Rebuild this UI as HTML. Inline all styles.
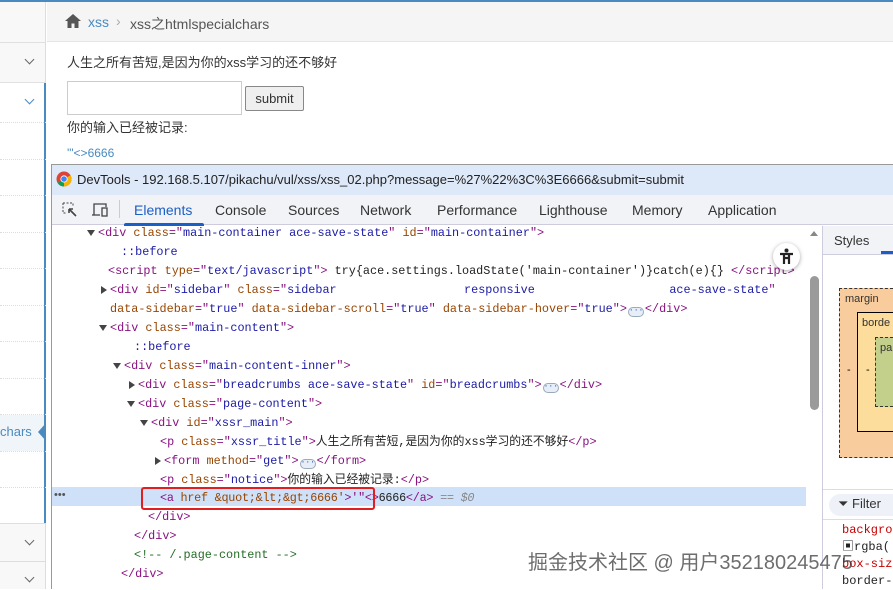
<!DOCTYPE html>
<html><head><meta charset="utf-8"><style>
*{margin:0;padding:0;box-sizing:border-box}
body{width:893px;height:589px;overflow:hidden;position:relative;background:#fff;font-family:"Liberation Sans","Noto Sans CJK SC",sans-serif}
.a{position:absolute}
.l{position:absolute;font-family:"Liberation Mono","Noto Sans CJK SC",monospace;font-size:11.8px;line-height:19px;white-space:pre;color:#222}
.t{color:#881280}.n{color:#994500}.v{color:#1a1aa6}.c{color:#236e25}
.sb{position:absolute;left:0;width:46px;border-bottom:1px dotted #ddd}
.chev{position:absolute;width:7px;height:7px;border-right:1.5px solid #666;border-bottom:1.5px solid #666;transform:rotate(45deg)}
.tri{position:absolute;left:-11px;top:6px;width:0;height:0;border-left:4px solid transparent;border-right:4px solid transparent;border-top:6px solid #444}
.trr{position:absolute;left:-9px;top:5px;width:0;height:0;border-top:4px solid transparent;border-bottom:4px solid transparent;border-left:6px solid #444}
.dots{display:inline-block;width:16px;height:10px;border:1px solid #9ab;border-radius:5px;background:#e8eef8;font-size:8px;line-height:6px;text-align:center;color:#1a56c8;vertical-align:0;margin:0 1px}
</style></head><body>
<div class="a" style="left:0;top:0;width:893px;height:2px;background:#4a8ac0"></div>
<div class="a" style="left:0;top:2px;width:46px;height:587px;background:#f8f8f8;border-right:1px solid #ddd"></div>
<div class="a" style="left:0;top:42px;width:46px;height:1px;background:#e0e0e0"></div>
<div class="chev" style="left:26px;top:56px"></div>
<div class="a" style="left:0;top:82px;width:46px;height:441px;background:#fff;border-right:2px solid #4a8ac0"></div>
<div class="a" style="left:0;top:82px;width:46px;height:1px;background:#e0e0e0"></div>
<div class="chev" style="left:26px;top:96px;border-color:#4a8ac0"></div>
<div class="sb" style="top:122px"></div><div class="sb" style="top:159px"></div><div class="sb" style="top:195px"></div><div class="sb" style="top:232px"></div><div class="sb" style="top:268px"></div><div class="sb" style="top:305px"></div><div class="sb" style="top:341px"></div><div class="sb" style="top:378px"></div><div class="sb" style="top:414px"></div><div class="sb" style="top:451px"></div><div class="sb" style="top:487px"></div>
<div class="a" style="left:0;top:415px;width:44px;height:36px;background:#f0f5fa"></div>
<div class="a" style="left:0;top:424px;font-size:13px;color:#4a8ac0">chars</div>
<div class="a" style="left:38px;top:423px;width:0;height:0;border-top:9px solid transparent;border-bottom:9px solid transparent;border-right:8px solid #4a8ac0"></div>
<div class="a" style="left:0;top:523px;width:46px;height:1px;background:#ddd"></div>
<div class="chev" style="left:26px;top:537px"></div>
<div class="a" style="left:0;top:561px;width:46px;height:1px;background:#ddd"></div>
<div class="chev" style="left:26px;top:574px"></div>
<div class="a" style="left:47px;top:2px;width:846px;height:40px;background:#f5f5f5;border-bottom:1px solid #e5e5e5"></div>
<svg class="a" style="left:64px;top:13px" width="18" height="16" viewBox="0 0 18 16"><path d="M9 1 L1 8 H3.5 V15 H7.5 V10.5 H10.5 V15 H14.5 V8 H17 Z" fill="#555"/></svg>
<div class="a" style="left:88px;top:14px;font-size:14px;color:#4a8ac0">xss</div>
<div class="a" style="left:116px;top:13px;font-size:14px;color:#aaa">›</div>
<div class="a" style="left:130px;top:14px;font-size:14px;color:#555">xss之htmlspecialchars</div>
<div class="a" style="left:67px;top:52px;font-size:13px;color:#333">人生之所有苦短,是因为你的xss学习的还不够好</div>
<div class="a" style="left:67px;top:81px;width:175px;height:34px;border:1px solid #ccc;background:#fff"></div>
<div class="a" style="left:245px;top:86px;width:59px;height:25px;border:1px solid #888;background:#efefef;border-radius:2px;font-size:13px;color:#333;text-align:center;line-height:23px">submit</div>
<div class="a" style="left:67px;top:117px;font-size:13px;color:#333">你的输入已经被记录:</div>
<div class="a" style="left:67px;top:146px;font-size:12px;color:#4a8ac0">'"&lt;&gt;6666</div>
<div class="a" style="left:51px;top:164px;width:842px;height:425px;background:#fff;border:1px solid #999;border-right:none;border-bottom:none"></div>
<div class="a" style="left:52px;top:165px;width:841px;height:30px;background:#dde8f8"></div>
<svg class="a" style="left:56px;top:171px" width="16" height="16" viewBox="0 0 16 16"><circle cx="8" cy="8" r="7.5" fill="#db4437"/><path d="M8 8 L1.5 11.7 A7.5 7.5 0 0 0 8 15.5 L11.6 9Z" fill="#0f9d58"/><path d="M8 8 L14.5 4.3 A7.5 7.5 0 0 1 8 15.5 Z" fill="#f4b400"/><circle cx="8" cy="8" r="3.6" fill="#fff"/><circle cx="8" cy="8" r="2.8" fill="#4285f4"/></svg>
<div class="a" style="left:77px;top:172px;font-size:13px;color:#222">DevTools - 192.168.5.107/pikachu/vul/xss/xss_02.php?message=%27%22%3C%3E6666&amp;submit=submit</div>
<div class="a" style="left:52px;top:195px;width:841px;height:30px;background:#f1f3f7;border-bottom:1px solid #ccd"></div>
<svg class="a" style="left:62px;top:202px" width="16" height="16" viewBox="0 0 16 16"><path d="M1 1h10v4M1 1v10h4" stroke="#444" fill="none" stroke-dasharray="2 1.5"/><path d="M7 7 L14 14 M7 7 h4 M7 7 v4" stroke="#444" stroke-width="1.6" fill="none"/></svg>
<svg class="a" style="left:91px;top:202px" width="18" height="16" viewBox="0 0 18 16"><path d="M3 13V2h12v3" stroke="#444" fill="none" stroke-width="1.3"/><path d="M1 13h8" stroke="#444" stroke-width="1.3"/><rect x="11" y="6" width="5" height="8" stroke="#444" fill="none" stroke-width="1.3"/></svg>
<div class="a" style="left:119px;top:200px;width:1px;height:18px;background:#ccc"></div>
<div class="a" style="left:124px;top:223px;width:80px;height:3px;background:#1a5fc8;border-radius:2px 2px 0 0"></div>
<div class="a" style="top:202px;font-size:14px;color:#333;left:0;width:893px">
<span class="a" style="left:134px;color:#1a5fc8">Elements</span><span class="a" style="left:215px">Console</span><span class="a" style="left:288px">Sources</span><span class="a" style="left:360px">Network</span><span class="a" style="left:437px">Performance</span><span class="a" style="left:539px">Lighthouse</span><span class="a" style="left:632px">Memory</span><span class="a" style="left:708px">Application</span></div>
<div class="a" style="left:822px;top:226px;width:1px;height:363px;background:#ccd"></div>
<div class="a" style="left:823px;top:226px;width:70px;height:29px;background:#f1f3f7;border-bottom:1px solid #ccd"></div>
<div class="a" style="left:834px;top:233px;font-size:13px;color:#333">Styles</div>
<div class="a" style="left:881px;top:251px;width:12px;height:3px;background:#1a5fc8"></div>
<div class="a" style="left:839px;top:288px;width:54px;height:170px;background:#f9cc9d;border:1px dashed #333;border-right:none"></div>
<div class="a" style="left:845px;top:293px;font-size:11px;color:#333">margin</div>
<div class="a" style="left:857px;top:312px;width:36px;height:120px;background:#fddd9b;border:1px solid #000;border-right:none"></div>
<div class="a" style="left:862px;top:317px;font-size:11px;color:#333">borde</div>
<div class="a" style="left:875px;top:337px;width:18px;height:70px;background:#c3d08b;border:1px dashed #333;border-right:none"></div>
<div class="a" style="left:880px;top:342px;font-size:11px;color:#333">pa</div>
<div class="a" style="left:847px;top:364px;font-size:11px">-</div><div class="a" style="left:866px;top:364px;font-size:11px">-</div>
<div class="a" style="left:823px;top:489px;width:70px;height:1px;background:#ddd"></div>
<div class="a" style="left:829px;top:494px;width:64px;height:22px;background:#eef1f7;border-radius:11px 0 0 11px"></div>
<div class="a" style="left:838px;top:496px;font-size:13px;color:#333">⏷ Filter</div>
<div class="a" style="left:823px;top:519px;width:70px;height:1px;background:#ddd"></div>
<div class="l" style="left:842px;top:522px;line-height:17px;font-size:12px"><span style="color:#c80000">backgrou</span>
<span>▣rgba(</span>
<span style="color:#c80000">box-sizi</span>
border-b</div>
<div class="a" style="left:806px;top:226px;width:16px;height:363px;background:#fff"></div>
<div class="a" style="left:810px;top:276px;width:9px;height:134px;background:#9a9a9a;border-radius:5px"></div>
<div class="a" style="left:810px;top:231px;width:0;height:0;border-left:4px solid transparent;border-right:4px solid transparent;border-bottom:5px solid #888"></div>
<div class="a" style="left:52px;top:487px;width:754px;height:19px;background:#cfe0f9"></div>
<div class="a" style="left:54px;top:487px;font-size:11px;color:#555;line-height:17px">•••</div>

<div class="l" style="left:98px;top:224px"><span class="tri"></span><span class="t">&lt;div </span><span class="n">class</span><span class="t">="</span><span class="v">main-container ace-save-state</span><span class="t">" </span><span class="n">id</span><span class="t">="</span><span class="v">main-container</span><span class="t">"&gt;</span></div>
<div class="l" style="left:121px;top:243px"><span class="v">::before</span></div>
<div class="l" style="left:108px;top:262px"><span class="t">&lt;script </span><span class="n">type</span><span class="t">="</span><span class="v">text/javascript</span><span class="t">"&gt;</span> try{ace.settings.loadState('main-container')}catch(e){} <span class="t">&lt;/script&gt;</span></div>
<div class="l" style="left:110px;top:281px"><span class="trr"></span><span class="t">&lt;div </span><span class="n">id</span><span class="t">="</span><span class="v">sidebar</span><span class="t">" </span><span class="n">class</span><span class="t">="</span><span class="v">sidebar                  responsive                   ace-save-state</span><span class="t">"</span></div>
<div class="l" style="left:110px;top:300px"><span class="n">data-sidebar</span><span class="t">="</span><span class="v">true</span><span class="t">" </span><span class="n">data-sidebar-scroll</span><span class="t">="</span><span class="v">true</span><span class="t">" </span><span class="n">data-sidebar-hover</span><span class="t">="</span><span class="v">true</span><span class="t">"&gt;</span><span class="dots">···</span><span class="t">&lt;/div&gt;</span></div>
<div class="l" style="left:110px;top:319px"><span class="tri"></span><span class="t">&lt;div </span><span class="n">class</span><span class="t">="</span><span class="v">main-content</span><span class="t">"&gt;</span></div>
<div class="l" style="left:134px;top:338px"><span class="v">::before</span></div>
<div class="l" style="left:124px;top:357px"><span class="tri"></span><span class="t">&lt;div </span><span class="n">class</span><span class="t">="</span><span class="v">main-content-inner</span><span class="t">"&gt;</span></div>
<div class="l" style="left:138px;top:376px"><span class="trr"></span><span class="t">&lt;div </span><span class="n">class</span><span class="t">="</span><span class="v">breadcrumbs ace-save-state</span><span class="t">" </span><span class="n">id</span><span class="t">="</span><span class="v">breadcrumbs</span><span class="t">"&gt;</span><span class="dots">···</span><span class="t">&lt;/div&gt;</span></div>
<div class="l" style="left:138px;top:395px"><span class="tri"></span><span class="t">&lt;div </span><span class="n">class</span><span class="t">="</span><span class="v">page-content</span><span class="t">"&gt;</span></div>
<div class="l" style="left:151px;top:414px"><span class="tri"></span><span class="t">&lt;div </span><span class="n">id</span><span class="t">="</span><span class="v">xssr_main</span><span class="t">"&gt;</span></div>
<div class="l" style="left:160px;top:433px"><span class="t">&lt;p </span><span class="n">class</span><span class="t">="</span><span class="v">xssr_title</span><span class="t">"&gt;</span>人生之所有苦短,是因为你的xss学习的还不够好<span class="t">&lt;/p&gt;</span></div>
<div class="l" style="left:164px;top:452px"><span class="trr"></span><span class="t">&lt;form </span><span class="n">method</span><span class="t">="</span><span class="v">get</span><span class="t">"&gt;</span><span class="dots">···</span><span class="t">&lt;/form&gt;</span></div>
<div class="l" style="left:160px;top:471px"><span class="t">&lt;p </span><span class="n">class</span><span class="t">="</span><span class="v">notice</span><span class="t">"&gt;</span>你的输入已经被记录:<span class="t">&lt;/p&gt;</span></div>
<div class="l" style="left:160px;top:489px;letter-spacing:-0.25px"><span class="t">&lt;a </span><span class="n">href &amp;quot;&amp;lt;&amp;gt;6666'</span><span class="t">&gt;'"</span><span class="t">&lt;&gt;</span>6666<span class="t">&lt;/a&gt;</span> <span style="color:#888;font-style:italic">== $0</span></div>
<div class="a" style="left:141px;top:487px;width:234px;height:23px;border:2px solid #e02020;border-radius:3px"></div>
<div class="l" style="left:148px;top:508px"><span class="t">&lt;/div&gt;</span></div>
<div class="l" style="left:134px;top:527px"><span class="t">&lt;/div&gt;</span></div>
<div class="l" style="left:134px;top:546px"><span class="c">&lt;!-- /.page-content --&gt;</span></div>
<div class="l" style="left:121px;top:565px"><span class="t">&lt;/div&gt;</span></div>
<div class="a" style="left:773px;top:243px;width:27px;height:27px;border-radius:50%;background:#fff;box-shadow:0 1px 4px rgba(0,0,0,.35)"></div>
<svg class="a" style="left:779px;top:248px" width="15" height="17" viewBox="0 0 15 17"><circle cx="7.5" cy="2.5" r="2" fill="#222"/><path d="M1 6h13M5 6v10M10 6v10M5 10h5" stroke="#222" stroke-width="2.2"/></svg>
<div class="a" style="left:528px;top:546px;font-size:20px;color:rgba(60,60,60,.75)">掘金技术社区 @ 用户352180245475</div>
</body></html>
